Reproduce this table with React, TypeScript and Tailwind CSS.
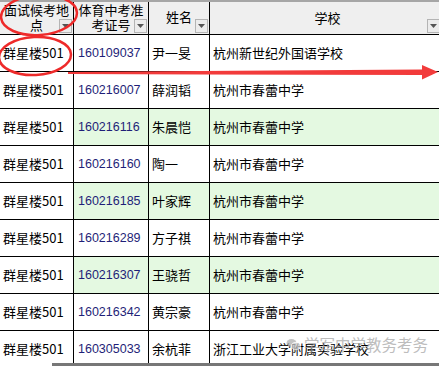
type Row = { place: string; id: string; name: string; school: string; hl?: boolean };

const ROWS: Row[] = [
  { place: "群星楼501", id: "160109037", name: "尹一旻", school: "杭州新世纪外国语学校" },
  { place: "群星楼501", id: "160216007", name: "薛润韬", school: "杭州市春蕾中学" },
  { place: "群星楼501", id: "160216116", name: "朱晨恺", school: "杭州市春蕾中学", hl: true },
  { place: "群星楼501", id: "160216160", name: "陶一", school: "杭州市春蕾中学" },
  { place: "群星楼501", id: "160216185", name: "叶家辉", school: "杭州市春蕾中学", hl: true },
  { place: "群星楼501", id: "160216289", name: "方子祺", school: "杭州市春蕾中学" },
  { place: "群星楼501", id: "160216307", name: "王骁哲", school: "杭州市春蕾中学", hl: true },
  { place: "群星楼501", id: "160216342", name: "黄宗豪", school: "杭州市春蕾中学" },
  { place: "群星楼501", id: "160305033", name: "余杭菲", school: "浙江工业大学附属实验学校" },
];

const CJK = "font-['SimSun','Noto_Sans_CJK_SC',sans-serif]";

function FilterButton() {
  return (
    <span className="absolute bottom-[1px] right-[1px] flex h-[14px] w-[13px] items-center justify-center border border-[#b4b4b4] bg-[#ececec]">
      <svg width="7" height="4" viewBox="0 0 7 4">
        <path d="M0 0h7L3.5 4z" fill="#555" />
      </svg>
    </span>
  );
}

function Annotations() {
  return (
    <svg className="pointer-events-none absolute left-0 top-0" width="439" height="366" viewBox="0 0 439 366">
      <ellipse cx="39" cy="15" rx="38" ry="20" fill="none" stroke="#ee2a2a" strokeWidth="2.5" transform="rotate(-4 39 15)" />
      <ellipse cx="35" cy="56" rx="36" ry="19" fill="none" stroke="#ee2a2a" strokeWidth="2.5" transform="rotate(-3 35 56)" />
      <path d="M68 72 L200 71 L422 69.5 L422 65 L438 72 L422 79.5 L422 75 L200 74.5 L68 74 Z" fill="#f23b3b" />
    </svg>
  );
}

export default function App() {
  return (
    <div className={`relative h-[366px] w-[439px] overflow-hidden bg-white ${CJK}`}>
      <div className="flex h-[35px] border-t-2 border-b border-t-[#a6a6a6] border-b-black bg-[#efefef] text-[13px] leading-[15px] text-black">
        <div className="relative flex w-[74px] shrink-0 flex-col items-center justify-center border-r border-black pb-[2px]">
          <span>面试候考地</span>
          <span>点</span>
          <FilterButton />
        </div>
        <div className="relative flex w-[75px] shrink-0 flex-col items-center justify-center border-r border-black pb-[2px]">
          <span>体育中考准</span>
          <span>考证号</span>
          <FilterButton />
        </div>
        <div className="relative flex w-[61px] shrink-0 items-center justify-center border-r border-black pb-[4px]">
          <span>姓名</span>
          <FilterButton />
        </div>
        <div className="relative flex w-[231px] shrink-0 items-center justify-center pb-[2px] pl-[4px]">
          <span>学校</span>
          <FilterButton />
        </div>
      </div>

      {ROWS.map((r) => (
        <div key={r.id} className="flex h-[37px] border-b border-black text-[13px] text-black">
          <div className="flex w-[74px] shrink-0 items-center border-r border-black pl-[3px]">{r.place}</div>
          <div
            className={`flex w-[75px] shrink-0 items-center border-r border-black pl-[4px] font-['Liberation_Sans',Arial,sans-serif] text-[12.5px] text-[#1f1f78] ${
              r.hl ? "bg-[#e4f9e1]" : ""
            }`}
          >
            {r.id}
          </div>
          <div className={`flex w-[61px] shrink-0 items-center border-r border-black pl-[3px] ${r.hl ? "bg-[#e4f9e1]" : ""}`}>
            {r.name}
          </div>
          <div className={`flex w-[231px] shrink-0 items-center pl-[3px] ${r.hl ? "bg-[#e4f9e1]" : ""}`}>{r.school}</div>
        </div>
      ))}

      <Annotations />

      <div className="absolute bottom-[10px] right-[11px] flex items-center gap-[3px] text-[15.5px] text-[#a8a8a8] opacity-75">
        <svg width="15" height="13" viewBox="0 0 15 13">
          <ellipse cx="5.5" cy="5" rx="5" ry="4" fill="#b0b0b0" />
          <ellipse cx="10" cy="8" rx="4.5" ry="3.6" fill="#c8c8c8" stroke="#fff" strokeWidth="0.8" />
        </svg>
        <span>学军中学教务考务</span>
      </div>

      <div className="absolute bottom-0 left-[52px] h-[3px] w-[387px] bg-[#777]" />
    </div>
  );
}
